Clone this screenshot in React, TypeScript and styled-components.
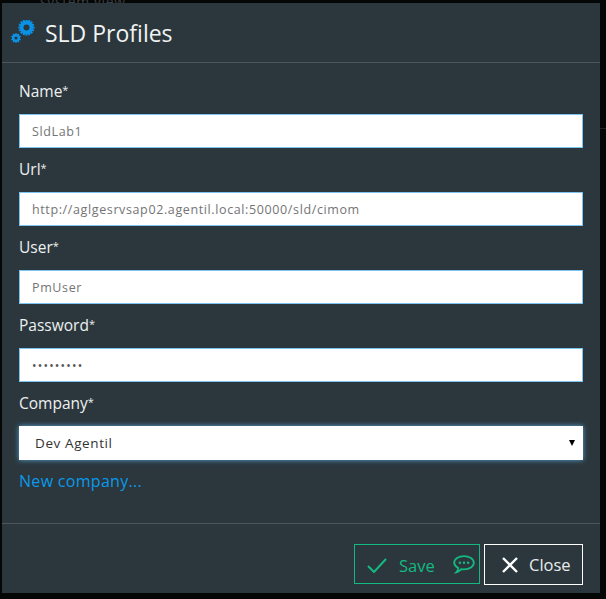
import React from "react";
import styled, { createGlobalStyle } from "styled-components";

const Global = createGlobalStyle`
  html, body { margin: 0; padding: 0; background: #050606; }
  body { width: 606px; height: 599px; overflow: hidden; font-family: "Open Sans", "Noto Sans", sans-serif; }
  * { box-sizing: border-box; }
`;
const Page = styled.div`
  position: relative;
  width: 606px;
  height: 599px;
  padding: 0 6px 6px 2px;
  &::after {
    content: "";
    position: absolute;
    left: 600px;
    top: 128px;
    width: 6px;
    height: 1px;
    background: #1f2426;
  }
`;
const BackdropStrip = styled.div`
  height: 3px;
  overflow: hidden;
  padding-left: 38px;
  font-size: 14px;
  line-height: 3px;
  letter-spacing: 0.6px;
  color: #3a3f41;
`;
const Modal = styled.div`
  width: 598px;
  height: 590px;
  background: #2b373d;
  display: flex;
  flex-direction: column;
`;
const Header = styled.header`
  height: 60px;
  border-bottom: 1px solid #4c565b;
  display: flex;
  align-items: center;
  padding: 0 0 0 9px;
  gap: 8px;
  flex: none;
`;
const Title = styled.h1`
  margin: 0;
  font-size: 23px;
  font-weight: 400;
  color: #f1f3f3;
  line-height: 60px;
`;
const Form = styled.div`
  flex: 1;
  padding: 15px 17px 0;
  display: flex;
  flex-direction: column;
`;
const Label = styled.label`
  height: 36px;
  font-size: 15.5px;
  line-height: 26px;
  color: #eef0f0;
  display: block;
  sup { font-size: 11px; line-height: 0; vertical-align: 3px; }
`;
const Field = styled.div`
  height: 34px;
  background: #fff;
  border: 1px solid #7cc4f0;
  margin-bottom: 8px;
  padding: 0 12px;
  display: flex;
  align-items: center;
  font-size: 12.5px;
  letter-spacing: 0.62px;
  color: #747474;
`;
const Dots = styled.span`
  font-size: 12px;
  letter-spacing: 1.2px;
  color: #555;
`;
const Select = styled.div`
  height: 34px;
  background: #fff;
  box-shadow: 0 0 5px #5da6d8;
  padding: 0 8px 0 16px;
  display: flex;
  align-items: center;
  justify-content: space-between;
  font-size: 13.5px;
  letter-spacing: 0.6px;
  color: #333;
`;
const Caret = styled.span`
  width: 0;
  height: 0;
  border-left: 3.5px solid transparent;
  border-right: 3.5px solid transparent;
  border-top: 6px solid #000;
`;
const Link = styled.a`
  margin-top: 10px;
  font-size: 16px;
  line-height: 22px;
  letter-spacing: 0.3px;
  color: #0a99ea;
`;
const Footer = styled.footer`
  height: 70px;
  flex: none;
  border-top: 1px solid #4c565b;
  display: flex;
  justify-content: flex-end;
  align-items: flex-start;
  gap: 4px;
  padding: 20px 17px 0 0;
`;
const SaveButton = styled.button`
  width: 126px;
  height: 40px;
  background: transparent;
  border: 1px solid #14b981;
  color: #14b981;
  display: flex;
  align-items: center;
  padding: 2px 3px 0 12px;
  font: 400 16.5px "Open Sans", sans-serif;
  span { margin-left: 12px; flex: 1; text-align: left; }
`;
const CloseButton = styled.button`
  width: 99px;
  height: 41px;
  background: transparent;
  border: 1px solid #fff;
  color: #e9ecec;
  display: flex;
  align-items: center;
  padding: 0 0 0 17px;
  gap: 11px;
  font: 400 16.5px "Open Sans", sans-serif;
`;

const Gear = ({ cx, cy, r, hole, teeth }: { cx: number; cy: number; r: number; hole: number; teeth: number }) => {
  const rects = Array.from({ length: teeth }, (_, i) => (
    <rect
      key={i}
      x={cx - r * 0.16}
      y={cy - r * 1.25}
      width={r * 0.32}
      height={r * 2.5}
      fill="#0a93e6"
      transform={`rotate(${(i * 180) / teeth} ${cx} ${cy})`}
    />
  ));
  return (
    <>
      {rects}
      <circle cx={cx} cy={cy} r={r} fill="#0a93e6" />
      <circle cx={cx} cy={cy} r={hole} fill="#2b373d" />
    </>
  );
};

const GearsIcon = () => (
  <svg width="26" height="26" viewBox="0 0 26 26">
    <Gear cx={15.5} cy={7.5} r={6.5} hole={3} teeth={8} />
    <Gear cx={5} cy={18} r={4} hole={1.6} teeth={5} />
  </svg>
);
const Check = () => (
  <svg width="20" height="16" viewBox="0 0 20 16" fill="none" stroke="#14b981" strokeWidth="2">
    <path d="M1 9l6 6L19 2" />
  </svg>
);
const Chat = () => (
  <svg width="24" height="20" viewBox="0 0 24 22" fill="none" stroke="#14b981" strokeWidth="2">
    <path d="M12 1.2c6 0 10.800 3.200 10.800 7.300s-4.800 7.300-10.800 7.300c-1 0-2-.1-3-.3-1.400 1.600-3.200 3-5.500 3.500 1.200-1.300 2-2.800 2.200-4.700C3 12.700 1.200 10.800 1.200 8.500 1.200 4.400 6 1.200 12 1.200z" />
    <circle cx="7.500" cy="8.500" r="1.400" fill="#14b981" stroke="none" />
    <circle cx="12" cy="8.500" r="1.400" fill="#14b981" stroke="none" />
    <circle cx="16.500" cy="8.500" r="1.400" fill="#14b981" stroke="none" />
  </svg>
);
const Cross = () => (
  <svg width="16" height="16" viewBox="0 0 16 16" stroke="#fff" strokeWidth="2.400">
    <path d="M1 1l14 14M15 1L1 15" />
  </svg>
);

const fields = [
  { label: "Name", value: "SldLab1" },
  { label: "Url", value: "http://aglgesrvsap02.agentil.local:50000/sld/cimom" },
  { label: "User", value: "PmUser" },
];

export default function App() {
  return (
    <Page>
      <Global />
      <BackdropStrip>system view</BackdropStrip>
      <Modal>
        <Header>
          <GearsIcon />
          <Title>SLD Profiles</Title>
        </Header>
        <Form>
          {fields.map((f) => (
            <React.Fragment key={f.label}>
              <Label>{f.label}<sup>*</sup></Label>
              <Field>{f.value}</Field>
            </React.Fragment>
          ))}
          <Label>Password<sup>*</sup></Label>
          <Field><Dots>•••••••••</Dots></Field>
          <Label>Company<sup>*</sup></Label>
          <Select>Dev Agentil<Caret /></Select>
          <Link>New company...</Link>
        </Form>
        <Footer>
          <SaveButton><Check /><span>Save</span><Chat /></SaveButton>
          <CloseButton><Cross />Close</CloseButton>
        </Footer>
      </Modal>
    </Page>
  );
}
